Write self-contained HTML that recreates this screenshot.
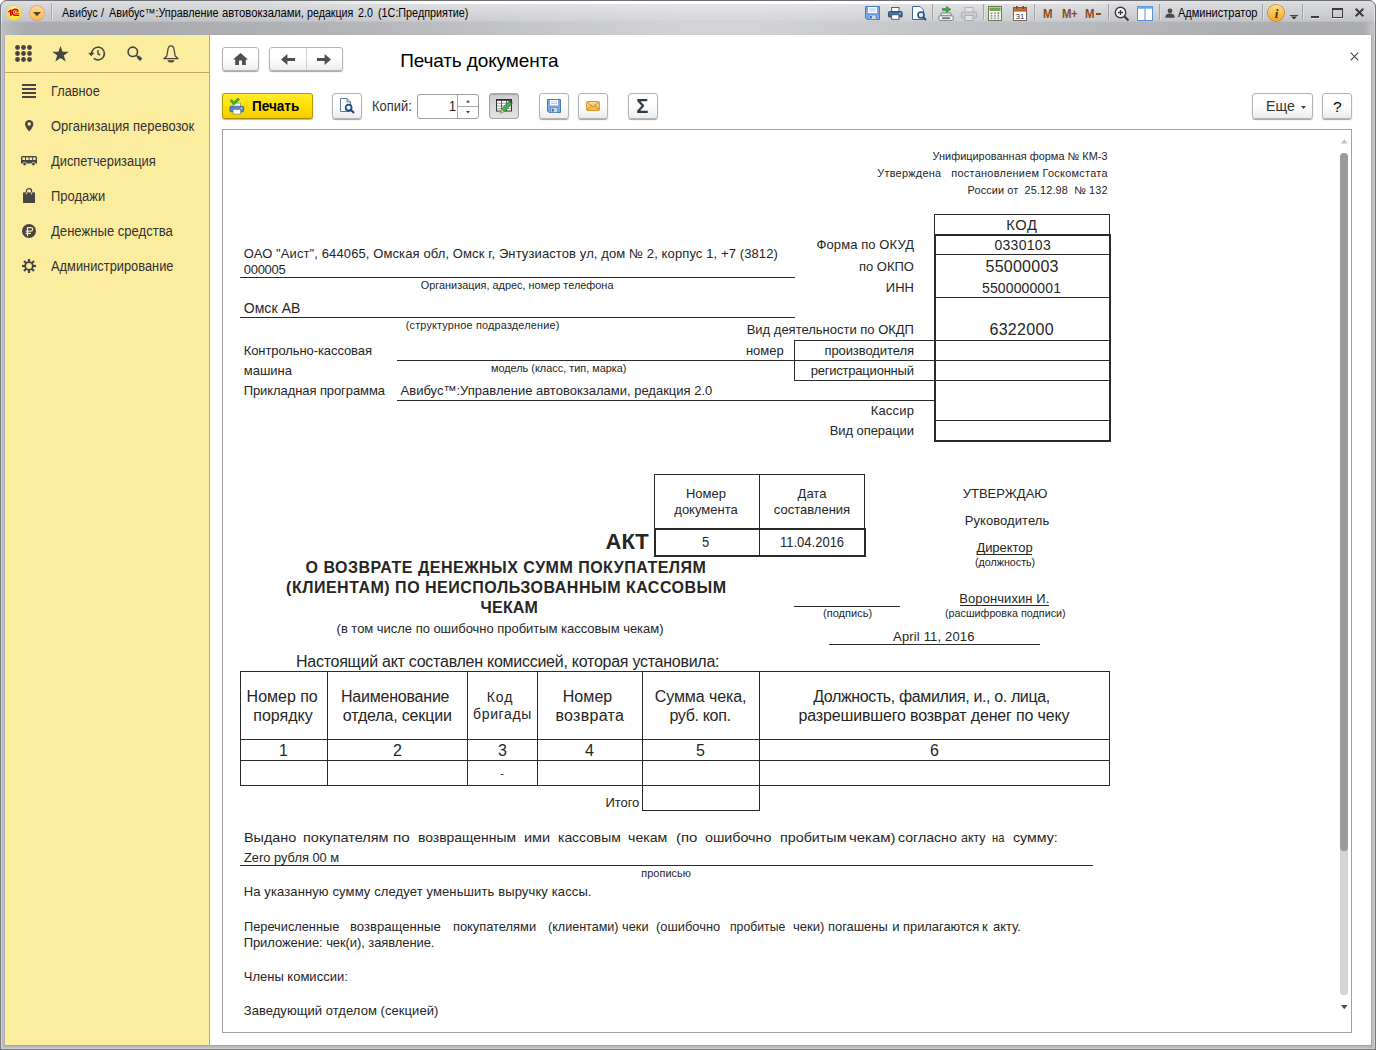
<!DOCTYPE html>
<html><head><meta charset="utf-8"><title>Печать документа</title>
<style>
html,body{margin:0;padding:0;}
body{width:1376px;height:1050px;position:relative;overflow:hidden;background:#fff;font-family:'Liberation Sans', sans-serif;}
.t{position:absolute;white-space:pre;font-family:'Liberation Sans', sans-serif;}
.r{position:absolute;}
.btn{position:absolute;box-sizing:border-box;border:1px solid #b4b4b4;border-radius:3px;background:linear-gradient(#ffffff 0%,#ffffff 45%,#ededed 100%);box-shadow:0 1px 1px rgba(0,0,0,.36);}
svg{position:absolute;overflow:visible;}
</style></head><body>
<div class="r" style="left:0px;top:0px;width:1376px;height:35px;background:linear-gradient(#e2e3e5 0px,#d9dadc 4px,#c3c4c8 21px,#abadb1 22.5px,#a9abaf 34px,#a4a6ad 35px);"></div>
<div class="r" style="left:0px;top:22px;width:26px;height:13px;background:linear-gradient(90deg,rgba(192,193,194,.95),rgba(192,193,194,0));"></div>
<div class="r" style="left:1364px;top:22px;width:12px;height:13px;background:linear-gradient(270deg,rgba(192,193,194,.95) 40%,rgba(192,193,194,0));"></div>
<div class="r" style="left:0px;top:1px;width:1376px;height:21px;background:linear-gradient(90deg,rgba(255,255,255,0.000) 150px,rgba(255,255,255,0.063) 344px,rgba(255,255,255,0.192) 520px,rgba(255,255,255,0.300) 680px,rgba(255,255,255,0.300) 760px,rgba(255,255,255,0.234) 860px,rgba(255,255,255,0.135) 1032px,rgba(255,255,255,0.039) 1200px,rgba(255,255,255,0.000) 1300px);"></div>
<div class="r" style="left:0px;top:22px;width:1376px;height:13px;background:linear-gradient(90deg,rgba(255,255,255,0.000) 150px,rgba(255,255,255,0.099) 344px,rgba(255,255,255,0.301) 520px,rgba(255,255,255,0.470) 680px,rgba(255,255,255,0.470) 760px,rgba(255,255,255,0.367) 860px,rgba(255,255,255,0.211) 1032px,rgba(255,255,255,0.061) 1200px,rgba(255,255,255,0.000) 1300px);"></div>
<div class="r" style="left:0px;top:1px;width:1376px;height:3px;background:linear-gradient(90deg,rgba(255,255,255,0) 300px,rgba(255,255,255,.95) 440px,rgba(255,255,255,.95) 980px,rgba(255,255,255,0) 1150px);"></div>
<div class="r" style="left:0px;top:0px;width:1376px;height:1px;background:#6e6f72;"></div>
<div class="r" style="left:0px;top:22px;width:1px;height:1028px;background:#787878;"></div>
<div class="r" style="left:1px;top:22px;width:1px;height:1028px;background:#d1d1d1;"></div>
<div class="r" style="left:2px;top:35px;width:1px;height:1015px;background:#bdbebf;"></div>
<div class="r" style="left:3px;top:35px;width:1px;height:1015px;background:#bdbebf;"></div>
<div class="r" style="left:4px;top:35px;width:1px;height:1015px;background:#a7a9b1;"></div>
<div class="r" style="left:1371px;top:35px;width:1px;height:1015px;background:#a7a9b1;"></div>
<div class="r" style="left:1372px;top:35px;width:1px;height:1015px;background:#bdbebf;"></div>
<div class="r" style="left:1373px;top:35px;width:1px;height:1015px;background:#bdbebf;"></div>
<div class="r" style="left:1374px;top:22px;width:1px;height:1028px;background:#d1d1d1;"></div>
<div class="r" style="left:1375px;top:22px;width:1px;height:1028px;background:#787878;"></div>
<div class="r" style="left:0px;top:1px;width:1px;height:21px;background:#787878;"></div>
<div class="r" style="left:1375px;top:1px;width:1px;height:21px;background:#787878;"></div>
<div class="r" style="left:1px;top:1px;width:1px;height:21px;background:#e4e5e6;"></div>
<div class="r" style="left:1374px;top:1px;width:1px;height:21px;background:#e4e5e6;"></div>
<div class="r" style="left:4px;top:1045px;width:1368px;height:1px;background:#a2a4ad;"></div>
<div class="r" style="left:3px;top:1046px;width:1370px;height:1px;background:#b8b9bb;"></div>
<div class="r" style="left:2px;top:1047px;width:1372px;height:1px;background:#bcbdbe;"></div>
<div class="r" style="left:1px;top:1048px;width:1374px;height:1px;background:#d0d0d0;"></div>
<div class="r" style="left:0px;top:1049px;width:1376px;height:1px;background:#777777;"></div>
<svg style="left:0;top:0" width="7" height="7"><path d="M0 0H7A7 7 0 0 0 0 7Z" fill="#fff"/><path d="M0.5 7A6.5 6.5 0 0 1 7 0.5" fill="none" stroke="#77787b"/></svg>
<svg style="left:1369px;top:0" width="7" height="7"><path d="M7 0H0A7 7 0 0 1 7 7Z" fill="#fff"/><path d="M6.5 7A6.5 6.5 0 0 0 0 0.5" fill="none" stroke="#77787b"/></svg>
<div class="r" style="left:7.1px;top:5.9px;width:14px;height:14px;border-radius:50%;background:radial-gradient(circle at 50% 30%,#fff9b0 0%,#ffea3c 55%,#f8d415 100%);box-shadow:0 0 0 .4px #e6cb45"></div>
<svg style="left:8px;top:9px" width="12" height="8" viewBox="0 0 12 8"><path d="M.3 2.4L2.4 .6H3.7V6.8H1.9V2.9L.7 3.7Z" fill="#e10000"/><path d="M10.3 2.6A3 3 0 1 0 7.5 6.2H11.2" fill="none" stroke="#e10000" stroke-width="1.5"/><path d="M8.7 3.4A1.2 1.2 0 1 0 7.5 4.3H11.2" fill="none" stroke="#e10000" stroke-width=".8"/></svg>
<div class="r" style="left:30.1px;top:5.9px;width:13.8px;height:13.8px;border-radius:50%;background:linear-gradient(#ffd890,#ffb64e);box-shadow:0 0 0 .7px #cb9c42"></div>
<svg style="left:33px;top:11.5px" width="8" height="5"><path d="M0 0H8L4 4.2Z" fill="#5a4420"/></svg>
<div class="r" style="left:51px;top:3px;width:1px;height:16px;background:#a6a7ab;"></div>
<div class="r" style="left:52px;top:3px;width:1px;height:16px;background:#e3e4e6;"></div>
<div class="t" style="left:61.66px;top:5.80px;font-size:12px;line-height:14px;color:#000;transform:scaleX(0.9044);transform-origin:0 0;">Авибус</div>
<div class="t" style="left:101.06px;top:5.80px;font-size:12px;line-height:14px;color:#000;transform:scaleX(0.9000);transform-origin:0 0;">/</div>
<div class="t" style="left:108.86px;top:5.80px;font-size:12px;line-height:14px;color:#000;transform:scaleX(0.9003);transform-origin:0 0;">Авибус™:Управление</div>
<div class="t" style="left:221.56px;top:5.80px;font-size:12px;line-height:14px;color:#000;transform:scaleX(0.9394);transform-origin:0 0;">автовокзалами,</div>
<div class="t" style="left:307.26px;top:5.80px;font-size:12px;line-height:14px;color:#000;transform:scaleX(0.8903);transform-origin:0 0;">редакция</div>
<div class="t" style="left:358.21px;top:5.80px;font-size:12px;line-height:14px;color:#000;transform:scaleX(0.8887);transform-origin:0 0;">2.0</div>
<div class="t" style="left:378.21px;top:5.80px;font-size:12px;line-height:14px;color:#000;transform:scaleX(0.8987);transform-origin:0 0;">(1С:Предприятие)</div>
<svg style="left:865px;top:6.3px" width="15" height="14" viewBox="0 0 15 14"><path d="M.5 .5H14.5V13.5H2L.5 12Z" fill="#7aa7e3" stroke="#4a7cc4"/><rect x="3" y="1" width="9" height="6" fill="#fff"/><path d="M4.5 3H10.5M4.5 5H10.5" stroke="#8fb0e0" stroke-width=".8"/><rect x="4" y="9" width="7" height="4.5" fill="#d5dae2" stroke="#3d6db3" stroke-width=".5"/><rect x="5" y="10" width="1.8" height="2.6" fill="#3d6db3"/></svg>
<svg style="left:888px;top:7px" width="14.6" height="12.8" viewBox="0 0 16 14"><rect x="4" y=".5" width="8" height="5" fill="#fff" stroke="#39577f"/><rect x=".5" y="5" width="15" height="6" rx="1" fill="#4a6d9c" stroke="#2b456b"/><rect x="4" y="8.5" width="8" height="5" fill="#fff" stroke="#39577f"/><rect x="12" y="6.5" width="2" height="1" fill="#cfe0f5"/></svg>
<svg style="left:912px;top:6px" width="15" height="15" viewBox="0 0 15 15"><path d="M.5 .5H8L11.5 4V13.5H.5Z" fill="#fff" stroke="#42648f"/><circle cx="9" cy="9" r="3" fill="#d6e8f8" stroke="#1f4e80" stroke-width="1.6"/><path d="M11.2 11.2L14 14" stroke="#1f4e80" stroke-width="2"/></svg>
<div class="r" style="left:932px;top:4px;width:1px;height:16px;background:#a3a4a8;"></div>
<div class="r" style="left:933px;top:4px;width:1px;height:16px;background:#dedfe1;"></div>
<svg style="left:938px;top:6px" width="16" height="15" viewBox="0 0 16 15"><rect x="3" y="6.8" width="10" height="3.4" rx=".8" fill="#e2e4e8" stroke="#727882" stroke-width=".9"/><rect x=".8" y="9.8" width="14.4" height="4.6" rx="1.2" fill="#f3f4f5" stroke="#727882" stroke-width=".9"/><rect x="4" y="11.4" width="8" height="1.5" fill="#5d636c"/><path d="M4.5 2.4H8.5V.4L12.8 3.4 8.5 6.4V4.4H4.5Z" fill="#41ad3d" stroke="#1d7a1b" stroke-width=".6"/></svg>
<svg style="left:961px;top:7px" width="16" height="14" viewBox="0 0 16 14" opacity=".55"><rect x="4" y=".5" width="8" height="5" fill="#f2f2f2" stroke="#8f949c"/><rect x=".5" y="5" width="15" height="6" rx="1" fill="#c3c6cc" stroke="#8f949c"/><rect x="4" y="8.5" width="8" height="5" fill="#f2f2f2" stroke="#8f949c"/></svg>
<div class="r" style="left:983px;top:4px;width:1px;height:16px;background:#a3a4a8;"></div>
<div class="r" style="left:984px;top:4px;width:1px;height:16px;background:#dedfe1;"></div>
<svg style="left:988px;top:6px" width="14" height="15" viewBox="0 0 14 15"><rect x=".5" y=".5" width="13" height="14" fill="#f1f3ee" stroke="#6a7a5c"/><rect x="1.5" y="1.5" width="11" height="3.5" fill="#6da84f"/><g fill="#7d8891"><rect x="2.8" y="6.6" width="1.5" height="1.5"/><rect x="6.2" y="6.6" width="1.5" height="1.5"/><rect x="9.6" y="6.6" width="1.5" height="1.5"/><rect x="2.8" y="9.1" width="1.5" height="1.5"/><rect x="6.2" y="9.1" width="1.5" height="1.5"/><rect x="9.6" y="9.1" width="1.5" height="1.5"/><rect x="2.8" y="11.6" width="1.5" height="1.5"/><rect x="6.2" y="11.6" width="1.5" height="1.5"/><rect x="9.6" y="11.6" width="1.5" height="1.5"/><rect x="9.6" y="6.6" width="1.5" height="1.5" fill="#d9534f"/></g></svg>
<svg style="left:1013px;top:6px" width="14" height="15" viewBox="0 0 14 15"><rect x=".5" y="1.5" width="13" height="13" fill="#fff" stroke="#7c6a5a"/><rect x=".5" y="1.5" width="13" height="3.5" fill="#c8703a" stroke="#9a4f22"/><rect x="3" y="0" width="1.5" height="3" fill="#6a4a35"/><rect x="9.5" y="0" width="1.5" height="3" fill="#6a4a35"/><text x="7" y="13" font-family="Liberation Sans" font-size="8" text-anchor="middle" fill="#333">31</text></svg>
<div class="r" style="left:1034px;top:4px;width:1px;height:16px;background:#a3a4a8;"></div>
<div class="r" style="left:1035px;top:4px;width:1px;height:16px;background:#dedfe1;"></div>
<div class="t" style="left:1043.00px;top:6.00px;font-size:13px;line-height:15px;color:#8b4a22;font-weight:700;transform:scaleX(0.8800);transform-origin:0 0;">M</div>
<div class="t" style="left:1062.00px;top:6.00px;font-size:13px;line-height:15px;color:#8b4a22;font-weight:700;transform:scaleX(0.8800);transform-origin:0 0;letter-spacing:-.6px;">M+</div>
<div class="t" style="left:1085.00px;top:6.00px;font-size:13px;line-height:15px;color:#8b4a22;font-weight:700;transform:scaleX(0.8800);transform-origin:0 0;">M</div>
<div class="r" style="left:1095.5px;top:12.5px;width:5px;height:2px;background:#8b4a22;"></div>
<div class="r" style="left:1108px;top:4px;width:1px;height:16px;background:#a3a4a8;"></div>
<div class="r" style="left:1109px;top:4px;width:1px;height:16px;background:#dedfe1;"></div>
<svg style="left:1114px;top:6px" width="16" height="16" viewBox="0 0 16 16"><circle cx="6.5" cy="6.5" r="5.2" fill="#f4f5f6" stroke="#3a3a3a" stroke-width="1.4"/><path d="M4 6.5H9M6.5 4V9" stroke="#3a3a3a" stroke-width="1.3"/><path d="M10.5 10.5L14.5 14.5" stroke="#3a3a3a" stroke-width="2.2"/></svg>
<svg style="left:1137px;top:6px" width="16" height="15" viewBox="0 0 16 15"><rect x=".5" y=".5" width="15" height="14" fill="#fff" stroke="#5b8ed4" stroke-width="1"/><rect x=".5" y=".5" width="15" height="2.2" fill="#6ea5e8"/><path d="M8 2.5V14.5" stroke="#5b8ed4" stroke-width="1"/></svg>
<div class="r" style="left:1159px;top:4px;width:1px;height:16px;background:#a3a4a8;"></div>
<div class="r" style="left:1160px;top:4px;width:1px;height:16px;background:#dedfe1;"></div>
<svg style="left:1165px;top:8px" width="10" height="10" viewBox="0 0 10 10"><circle cx="5" cy="2.8" r="2.4" fill="#4a4a4a"/><path d="M.3 9.8C.3 6.6 2.2 5.6 5 5.6S9.7 6.6 9.7 9.8Z" fill="#4a4a4a"/></svg>
<div class="t" style="left:1178.16px;top:6.00px;font-size:12px;line-height:14px;color:#000;transform:scaleX(0.9180);transform-origin:0 0;">Администратор</div>
<div class="r" style="left:1262px;top:4px;width:1px;height:16px;background:#a3a4a8;"></div>
<div class="r" style="left:1263px;top:4px;width:1px;height:16px;background:#dedfe1;"></div>
<div class="r" style="left:1268px;top:5px;width:16px;height:16px;border-radius:50%;background:linear-gradient(#ffdf7c,#f5a623);box-shadow:0 0 0 .8px #b9801d"></div>
<div class="t" style="left:1274.70px;top:6.00px;font-size:13px;line-height:15px;color:#4a3210;font-weight:700;font-family:'Liberation Serif',serif;font-style:italic;">i</div>
<svg style="left:1289.5px;top:15px" width="8" height="5"><path d="M0 .5H8" stroke="#444" stroke-width="1"/><path d="M1 1.5H7L4 4.5Z" fill="#333"/></svg>
<div class="r" style="left:1302px;top:4px;width:1px;height:16px;background:#a3a4a8;"></div>
<div class="r" style="left:1303px;top:4px;width:1px;height:16px;background:#dedfe1;"></div>
<div class="r" style="left:1311px;top:16px;width:8px;height:2px;background:#3c3c3c;"></div>
<div class="r" style="left:1311px;top:18px;width:8px;height:1px;background:#e8e8ea;"></div>
<div class="r" style="left:1332px;top:8px;width:11px;height:10px;box-sizing:border-box;border:1px solid #3c3c3c;border-top-width:2px;box-shadow:0 1px 0 #e6e6e8"></div>
<svg style="left:1355px;top:8px" width="9" height="9"><path d="M.7 .7L8.3 8.3M8.3 .7L.7 8.3" stroke="#3c3c3c" stroke-width="2"/></svg>
<div class="r" style="left:5px;top:35px;width:205px;height:1010px;background:#fcec9d;"></div>
<div class="r" style="left:5px;top:35px;width:1px;height:1010px;background:#fff2a0;"></div>
<div class="r" style="left:208px;top:35px;width:1px;height:1010px;background:#fef0a1;"></div>
<div class="r" style="left:5px;top:71px;width:203px;height:1px;background:#fef0a1;"></div>
<div class="r" style="left:5px;top:73px;width:203px;height:1px;background:#fef0a1;"></div>
<div class="r" style="left:209px;top:35px;width:1px;height:1010px;background:#bbaa5b;"></div>
<div class="r" style="left:5px;top:72px;width:204px;height:1px;background:#bcab5c;"></div>
<svg style="left:15px;top:45px" width="17" height="17" fill="#454545"><circle cx="2.5" cy="2.5" r="2.4"/><circle cx="2.5" cy="8.5" r="2.4"/><circle cx="2.5" cy="14.5" r="2.4"/><circle cx="8.5" cy="2.5" r="2.4"/><circle cx="8.5" cy="8.5" r="2.4"/><circle cx="8.5" cy="14.5" r="2.4"/><circle cx="14.5" cy="2.5" r="2.4"/><circle cx="14.5" cy="8.5" r="2.4"/><circle cx="14.5" cy="14.5" r="2.4"/></svg>
<svg style="left:52.3px;top:45.8px" width="17" height="16" viewBox="0 0 17 16"><path d="M8.5 0L10.6 5.7H16.8L11.8 9.4 13.7 15.6 8.5 11.9 3.3 15.6 5.2 9.4 .2 5.7H6.4Z" fill="#454545"/></svg>
<svg style="left:88px;top:45px" width="18" height="17" viewBox="0 0 18 17"><path d="M3.6 8.9A6.4 6.4 0 1 1 5.8 13.4" fill="none" stroke="#454545" stroke-width="1.5"/><path d="M.2 7.7H6.4L3.3 11.2Z" fill="#454545"/><path d="M10 5V8.8L12.2 10.2" fill="none" stroke="#454545" stroke-width="1.4"/></svg>
<svg style="left:127px;top:46px" width="16" height="15" viewBox="0 0 16 15"><circle cx="5.8" cy="5.8" r="4.7" fill="none" stroke="#454545" stroke-width="1.6"/><path d="M9.1 9.1L11.4 11.2" stroke="#454545" stroke-width="1.5"/><path d="M10.9 10.7L14.2 13.7" stroke="#454545" stroke-width="3.2"/></svg>
<svg style="left:163px;top:44.5px" width="16" height="18" viewBox="0 0 16 18"><path d="M8 .9C5.9 .9 5.2 2.6 4.9 4.6L3.8 11 .9 13.7H15.1L12.2 11 11.1 4.6C10.8 2.6 10.1 .9 8 .9Z" fill="none" stroke="#454545" stroke-width="1.25" stroke-linejoin="round"/><path d="M4.6 15.2H11.4A3.4 2.2 0 0 1 4.6 15.2Z" fill="#454545"/></svg>
<div class="t" style="left:50.67px;top:83.00px;font-size:14px;line-height:16px;color:#333;transform:scaleX(0.9114);transform-origin:0 0;">Главное</div>
<div class="t" style="left:50.67px;top:118.00px;font-size:14px;line-height:16px;color:#333;transform:scaleX(0.9281);transform-origin:0 0;">Организация перевозок</div>
<div class="t" style="left:50.67px;top:153.00px;font-size:14px;line-height:16px;color:#333;transform:scaleX(0.9186);transform-origin:0 0;">Диспетчеризация</div>
<div class="t" style="left:50.67px;top:188.00px;font-size:14px;line-height:16px;color:#333;transform:scaleX(0.9263);transform-origin:0 0;">Продажи</div>
<div class="t" style="left:50.67px;top:223.00px;font-size:14px;line-height:16px;color:#333;transform:scaleX(0.9347);transform-origin:0 0;">Денежные средства</div>
<div class="t" style="left:50.67px;top:258.00px;font-size:14px;line-height:16px;color:#333;transform:scaleX(0.9173);transform-origin:0 0;">Администрирование</div>
<div class="r" style="left:22px;top:84px;width:14px;height:2px;background:#454545;"></div>
<div class="r" style="left:22px;top:88px;width:14px;height:2px;background:#454545;"></div>
<div class="r" style="left:22px;top:92px;width:14px;height:2px;background:#454545;"></div>
<div class="r" style="left:22px;top:96px;width:14px;height:2px;background:#454545;"></div>
<svg style="left:25px;top:119.8px" width="8.4" height="11.4" viewBox="0 0 8 11"><path d="M4 0A4 4 0 0 0 0 4C0 6.6 4 11 4 11S8 6.6 8 4A4 4 0 0 0 4 0Z" fill="#454545"/><circle cx="4" cy="3.9" r="1.7" fill="#fcec9d"/></svg>
<svg style="left:21px;top:156px" width="16" height="10" viewBox="0 0 16 10"><path d="M1.5 0H14.5A1.5 1.5 0 0 1 16 1.5V7.6H0V1.5A1.5 1.5 0 0 1 1.5 0Z" fill="#454545"/><g fill="#fcec9d"><rect x="1.4" y="1.4" width="2.6" height="2.6"/><rect x="5" y="1.4" width="2.6" height="2.6"/><rect x="8.6" y="1.4" width="2.6" height="2.6"/><rect x="12.2" y="1.4" width="2.4" height="2.6"/></g><circle cx="3.6" cy="8" r="1.8" fill="#454545" stroke="#fcec9d" stroke-width=".7"/><circle cx="12.4" cy="8" r="1.8" fill="#454545" stroke="#fcec9d" stroke-width=".7"/></svg>
<svg style="left:23px;top:188px" width="12" height="15" viewBox="0 0 12 15"><path d="M0 4.4H12V15H0Z" fill="#454545"/><path d="M3.4 6V3.2A2.6 2.6 0 0 1 8.6 3.2V6" fill="none" stroke="#454545" stroke-width="1.2"/><path d="M3.4 4.4V6.4M8.6 4.4V6.4" stroke="#fcec9d" stroke-width=".9"/></svg>
<svg style="left:22px;top:224px" width="14" height="14" viewBox="0 0 14 14"><circle cx="7" cy="7" r="7" fill="#454545"/><path d="M5.5 12.1V3.55H9A1.75 1.75 0 0 1 9 7.05H3.7" fill="none" stroke="#fcec9d" stroke-width="1.2"/><path d="M3.7 9.35H8.9" fill="none" stroke="#fcec9d" stroke-width="1.3"/></svg>
<svg style="left:22px;top:259px" width="14" height="14" viewBox="0 0 14 14" fill="#454545"><rect x="5.9" y="0" width="2.2" height="3" transform="rotate(0 7 7)"/><rect x="5.9" y="0" width="2.2" height="3" transform="rotate(45 7 7)"/><rect x="5.9" y="0" width="2.2" height="3" transform="rotate(90 7 7)"/><rect x="5.9" y="0" width="2.2" height="3" transform="rotate(135 7 7)"/><rect x="5.9" y="0" width="2.2" height="3" transform="rotate(180 7 7)"/><rect x="5.9" y="0" width="2.2" height="3" transform="rotate(225 7 7)"/><rect x="5.9" y="0" width="2.2" height="3" transform="rotate(270 7 7)"/><rect x="5.9" y="0" width="2.2" height="3" transform="rotate(315 7 7)"/><circle cx="7" cy="7" r="4.7"/><circle cx="7" cy="7" r="2.9" fill="#fcec9d"/></svg>
<div class="btn" style="left:222px;top:47px;width:37px;height:24px;"></div>
<svg style="left:233px;top:53px" width="15" height="12" viewBox="0 0 15 12"><path d="M7.5 0L15 6.6H12.8V12H9V7.6H6V12H2.2V6.6H0Z" fill="#4f4f4f"/></svg>
<div class="btn" style="left:269px;top:47px;width:74px;height:24px;"></div>
<div class="r" style="left:306px;top:48px;width:1px;height:22px;background:#d0d0d0;"></div>
<svg style="left:281px;top:53.5px" width="14" height="11" viewBox="0 0 14 11"><path d="M0 5.5L6.4 0V3.9H14V7.1H6.4V11Z" fill="#4f4f4f"/></svg>
<svg style="left:317px;top:53.5px" width="14" height="11" viewBox="0 0 14 11"><path d="M14 5.5L7.6 0V3.9H0V7.1H7.6V11Z" fill="#4f4f4f"/></svg>
<div class="t" style="left:400.14px;top:49.50px;font-size:19px;line-height:21px;color:#000;letter-spacing:-0.123px;">Печать документа</div>
<svg style="left:1350px;top:52px" width="9" height="9"><path d="M.7 .7L8.3 8.3M8.3 .7L.7 8.3" stroke="#444" stroke-width="1.1"/></svg>
<div class="btn" style="left:222px;top:93px;width:91px;height:26px;border-color:#b9a000 #b49a00 #a88e00;background:linear-gradient(#ffea30 0%,#ffe100 50%,#f4cb00 100%);box-shadow:0 1px 1px rgba(0,0,0,.3)"></div>
<svg style="left:229.3px;top:97.5px" width="15.6" height="16.6" viewBox="0 0 17 18"><rect x="4.5" y="5.5" width="8" height="5" fill="#fff" stroke="#7b8794" stroke-width=".8"/><rect x="1" y="9" width="15" height="6" rx="1" fill="#5b87c0" stroke="#33598c" stroke-width=".8"/><rect x="4.5" y="12.5" width="8" height="5" fill="#fff" stroke="#7b8794" stroke-width=".8"/><circle cx="13.6" cy="11" r=".8" fill="#fff"/><path d="M1.2 3.2L3 1.6 5.6 4.2 9.6 0 11.4 1.6 5.6 7.6Z" fill="#35b535" stroke="#1b7f1b" stroke-width=".6"/></svg>
<div class="t" style="left:251.87px;top:98.00px;font-size:14px;line-height:16px;color:#000;font-weight:700;transform:scaleX(0.9666);transform-origin:0 0;">Печать</div>
<div class="btn" style="left:332px;top:93px;width:30px;height:26px;"></div>
<svg style="left:340px;top:98px" width="15" height="16" viewBox="0 0 15 16"><path d="M.5 .5H7L10.5 4V13.5H.5Z" fill="#fff" stroke="#5b7698"/><path d="M7 .5V4H10.5" fill="none" stroke="#5b7698"/><circle cx="8.6" cy="9.6" r="3" fill="#e6f1fb" stroke="#174a7c" stroke-width="1.7"/><path d="M10.8 11.8L14 15" stroke="#174a7c" stroke-width="2.1"/></svg>
<div class="t" style="left:371.67px;top:98.00px;font-size:14px;line-height:16px;color:#333;transform:scaleX(0.9233);transform-origin:0 0;">Копий:</div>
<div class="r" style="left:417px;top:94px;width:62px;height:25px;box-sizing:border-box;border:1px solid #9e9e9e;border-radius:3px;background:#fff"></div>
<div class="r" style="left:457px;top:95px;width:1px;height:23px;background:#a8a8a8;"></div>
<div class="r" style="left:458px;top:106px;width:20px;height:1px;background:#a8a8a8;"></div>
<div class="t" style="left:448.67px;top:98.00px;font-size:14px;line-height:16px;color:#222;transform:scaleX(0.9000);transform-origin:0 0;">1</div>
<svg style="left:465.5px;top:100px" width="4" height="3"><path d="M0 2.5H4L2 0Z" fill="#444"/></svg>
<svg style="left:465.5px;top:111px" width="4" height="3"><path d="M0 0H4L2 2.5Z" fill="#444"/></svg>
<div class="btn" style="left:489px;top:93px;width:30px;height:26px;background:linear-gradient(#cecece,#e2e2e2);border-color:#a3a3a3;box-shadow:inset 0 1px 1px rgba(0,0,0,.18)"></div>
<svg style="left:496px;top:99px" width="17" height="15" viewBox="0 0 17 15"><rect x=".5" y=".5" width="15" height="11.5" fill="#fff" stroke="#2e2e2e"/><path d="M.5 1H15.5" stroke="#2e2e2e" stroke-width="1.6"/><path d="M.5 4.3H15.5M.5 7H15.5M.5 9.6H15.5" stroke="#777" stroke-width=".7"/><path d="M5.5 1V12M10.5 1V12" stroke="#444" stroke-width=".8"/><path d="M12.6 2.4L15.8 5 8.6 12.6 5.6 10Z" fill="#41b04b" stroke="#1f7a2a" stroke-width=".6"/><path d="M12.6 2.4L13.8 1.2 16.8 3.7 15.8 5Z" fill="#4a4a4a"/><path d="M5.6 10L8.6 12.6 4 14.4Z" fill="#e8c48a" stroke="#8a6a3a" stroke-width=".5"/></svg>
<div class="btn" style="left:539px;top:93px;width:30px;height:26px;"></div>
<svg style="left:547px;top:99px" width="14" height="14" viewBox="0 0 14 14"><path d="M.5 .5H13.5V13.5H2L.5 12Z" fill="#7ba7e2" stroke="#4478c0"/><rect x="3" y="1" width="8" height="5.4" fill="#fff"/><path d="M4 2.8H10M4 4.6H10" stroke="#9fb5d6" stroke-width=".7"/><rect x="3.6" y="8.6" width="7" height="4.9" fill="#cdd5d2" stroke="#4478c0" stroke-width=".5"/><rect x="4.8" y="9.8" width="1.8" height="2.8" fill="#3465a8"/></svg>
<div class="btn" style="left:578px;top:93px;width:30px;height:26px;"></div>
<svg style="left:586px;top:101px" width="14" height="10" viewBox="0 0 14 10"><defs><linearGradient id="mg" x1="0" y1="0" x2="0" y2="1"><stop offset="0" stop-color="#fcdc95"/><stop offset="1" stop-color="#f2b54a"/></linearGradient></defs><rect x=".5" y=".5" width="13" height="9" rx="1" fill="url(#mg)" stroke="#d9962b"/><path d="M1 1L7 6 13 1M1 9L5.2 4.6M13 9L8.8 4.6" fill="none" stroke="#c07f12" stroke-width=".9"/></svg>
<div class="btn" style="left:628px;top:93px;width:30px;height:26px;"></div>
<div class="t" style="left:636.30px;top:95.00px;font-size:20px;line-height:22px;color:#2b3a4a;font-weight:700;">Σ</div>
<div class="btn" style="left:1252px;top:93px;width:61px;height:26px;"></div>
<div class="t" style="left:1265.67px;top:98.00px;font-size:14px;line-height:16px;color:#333;transform:scaleX(1.0091);transform-origin:0 0;">Еще</div>
<svg style="left:1301px;top:106px" width="5" height="3"><path d="M0 0H5L2.5 3Z" fill="#444"/></svg>
<div class="btn" style="left:1322px;top:93px;width:30px;height:26px;"></div>
<div class="t" style="left:1332.89px;top:98.00px;font-size:15.5px;line-height:17px;color:#000;">?</div>
<div class="r" style="left:222px;top:129px;width:1130px;height:904px;box-sizing:border-box;border:1px solid #a0a0a0;background:#fff"></div>
<svg style="left:1341px;top:139px" width="7" height="5"><path d="M0 4.5H6.6L3.3 0Z" fill="#c3c3c3"/></svg>
<div class="r" style="left:1340px;top:153px;width:8px;height:842px;border-radius:4px;background:#d5d5d5"></div>
<div class="r" style="left:1340px;top:153px;width:8px;height:698px;border-radius:4px;background:#9b9b9b"></div>
<svg style="left:1340.5px;top:1005px" width="7" height="5"><path d="M0 0H6.6L3.3 4.2Z" fill="#4d4d4d"/></svg>
<div class="t" style="left:932.54px;top:150.00px;font-size:10.9px;line-height:12px;color:#262626;letter-spacing:0.028px;">Унифицированная форма № КМ-3</div>
<div class="t" style="left:877.19px;top:167.00px;font-size:10.9px;line-height:12px;color:#262626;letter-spacing:0.279px;">Утверждена   постановлением Госкомстата</div>
<div class="t" style="left:967.62px;top:184.00px;font-size:10.9px;line-height:12px;color:#262626;letter-spacing:0.110px;">России от  25.12.98  № 132</div>
<div class="r" style="left:934px;top:214px;width:176px;height:1px;background:#2a2a2a;"></div>
<div class="r" style="left:934px;top:214px;width:1px;height:21px;background:#2a2a2a;"></div>
<div class="r" style="left:1109px;top:214px;width:1px;height:21px;background:#2a2a2a;"></div>
<div class="r" style="left:934px;top:234px;width:177px;height:2px;background:#2a2a2a;"></div>
<div class="r" style="left:934px;top:234px;width:2px;height:208px;background:#2a2a2a;"></div>
<div class="r" style="left:1109px;top:234px;width:2px;height:208px;background:#2a2a2a;"></div>
<div class="r" style="left:934px;top:440px;width:177px;height:2px;background:#2a2a2a;"></div>
<div class="r" style="left:936px;top:254px;width:173px;height:1px;background:#2a2a2a;"></div>
<div class="r" style="left:936px;top:297px;width:173px;height:1px;background:#2a2a2a;"></div>
<div class="r" style="left:936px;top:340px;width:173px;height:1px;background:#2a2a2a;"></div>
<div class="r" style="left:936px;top:360px;width:173px;height:1px;background:#2a2a2a;"></div>
<div class="r" style="left:936px;top:380px;width:173px;height:1px;background:#2a2a2a;"></div>
<div class="r" style="left:936px;top:420px;width:173px;height:1px;background:#2a2a2a;"></div>
<div class="t" style="left:1006.16px;top:217.00px;font-size:14.67px;line-height:16px;color:#262626;letter-spacing:0.643px;">КОД</div>
<div class="t" style="left:994.42px;top:236.50px;font-size:14px;line-height:16px;color:#262626;letter-spacing:0.306px;">0330103</div>
<div class="t" style="left:985.55px;top:257.50px;font-size:16px;line-height:17px;color:#262626;letter-spacing:0.244px;">55000003</div>
<div class="t" style="left:981.98px;top:279.50px;font-size:14px;line-height:16px;color:#262626;letter-spacing:0.129px;">5500000001</div>
<div class="t" style="left:989.43px;top:321.00px;font-size:16px;line-height:17px;color:#262626;letter-spacing:0.306px;">6322000</div>
<div class="t" style="left:816.51px;top:237.00px;font-size:13px;line-height:15px;color:#262626;letter-spacing:0.096px;">Форма по ОКУД</div>
<div class="t" style="left:858.95px;top:259.00px;font-size:13px;line-height:15px;color:#262626;">по ОКПО</div>
<div class="t" style="left:885.86px;top:280.00px;font-size:13px;line-height:15px;color:#262626;">ИНН</div>
<div class="t" style="left:746.71px;top:322.00px;font-size:13px;line-height:15px;color:#262626;letter-spacing:-0.006px;">Вид деятельности по ОКДП</div>
<div class="t" style="left:824.43px;top:343.00px;font-size:13px;line-height:15px;color:#262626;letter-spacing:-0.080px;">производителя</div>
<div class="t" style="left:810.70px;top:363.00px;font-size:13px;line-height:15px;color:#262626;letter-spacing:-0.214px;">регистрационный</div>
<div class="t" style="left:870.63px;top:403.00px;font-size:13px;line-height:15px;color:#262626;letter-spacing:0.212px;">Кассир</div>
<div class="t" style="left:829.74px;top:423.00px;font-size:13px;line-height:15px;color:#262626;letter-spacing:-0.074px;">Вид операции</div>
<div class="t" style="left:745.91px;top:343.00px;font-size:13px;line-height:15px;color:#262626;">номер</div>
<div class="r" style="left:794px;top:340px;width:141px;height:1px;background:#2a2a2a;"></div>
<div class="r" style="left:794px;top:360px;width:141px;height:1px;background:#2a2a2a;"></div>
<div class="r" style="left:794px;top:380px;width:141px;height:1px;background:#2a2a2a;"></div>
<div class="r" style="left:794px;top:340px;width:1px;height:41px;background:#2a2a2a;"></div>
<div class="t" style="left:243.72px;top:246.00px;font-size:13px;line-height:15px;color:#262626;letter-spacing:0.107px;">ОАО &quot;Аист&quot;, 644065, Омская обл, Омск г, Энтузиастов ул, дом № 2, корпус 1, +7 (3812)</div>
<div class="t" style="left:243.72px;top:262.00px;font-size:13px;line-height:15px;color:#262626;letter-spacing:-0.270px;">000005</div>
<div class="r" style="left:240px;top:277px;width:555px;height:1px;background:#2a2a2a;"></div>
<div class="t" style="left:420.71px;top:279.30px;font-size:10.9px;line-height:12px;color:#262626;letter-spacing:0.007px;">Организация, адрес, номер телефона</div>
<div class="t" style="left:243.67px;top:300.00px;font-size:14px;line-height:16px;color:#262626;letter-spacing:0.092px;">Омск АВ</div>
<div class="r" style="left:240px;top:317px;width:555px;height:1px;background:#2a2a2a;"></div>
<div class="t" style="left:405.71px;top:319.00px;font-size:10.9px;line-height:12px;color:#262626;letter-spacing:0.176px;">(структурное подразделение)</div>
<div class="t" style="left:243.72px;top:343.00px;font-size:13px;line-height:15px;color:#262626;letter-spacing:-0.087px;">Контрольно-кассовая</div>
<div class="r" style="left:397px;top:360px;width:398px;height:1px;background:#2a2a2a;"></div>
<div class="t" style="left:243.72px;top:363.00px;font-size:13px;line-height:15px;color:#262626;">машина</div>
<div class="t" style="left:490.91px;top:362.00px;font-size:10.9px;line-height:12px;color:#262626;">модель (класс, тип, марка)</div>
<div class="t" style="left:243.72px;top:383.00px;font-size:13px;line-height:15px;color:#262626;letter-spacing:-0.088px;">Прикладная программа</div>
<div class="t" style="left:400.62px;top:383.00px;font-size:13px;line-height:15px;color:#262626;letter-spacing:0.002px;">Авибус™:Управление автовокзалами, редакция 2.0</div>
<div class="r" style="left:397px;top:400px;width:538px;height:1px;background:#2a2a2a;"></div>
<div class="r" style="left:654px;top:474px;width:211px;height:1px;background:#2a2a2a;"></div>
<div class="r" style="left:654px;top:474px;width:1px;height:55px;background:#2a2a2a;"></div>
<div class="r" style="left:759px;top:474px;width:1px;height:82px;background:#2a2a2a;"></div>
<div class="r" style="left:864px;top:474px;width:1px;height:55px;background:#2a2a2a;"></div>
<div class="r" style="left:654px;top:528px;width:212px;height:2px;background:#2a2a2a;"></div>
<div class="r" style="left:654px;top:528px;width:2px;height:29px;background:#2a2a2a;"></div>
<div class="r" style="left:864px;top:528px;width:2px;height:29px;background:#2a2a2a;"></div>
<div class="r" style="left:654px;top:555px;width:212px;height:2px;background:#2a2a2a;"></div>
<div class="t" style="left:685.99px;top:486.00px;font-size:13px;line-height:15px;color:#262626;">Номер</div>
<div class="t" style="left:674.30px;top:502.00px;font-size:13px;line-height:15px;color:#262626;">документа</div>
<div class="t" style="left:797.60px;top:486.00px;font-size:13px;line-height:15px;color:#262626;">Дата</div>
<div class="t" style="left:773.84px;top:502.00px;font-size:13px;line-height:15px;color:#262626;">составления</div>
<div class="t" style="left:702.36px;top:533.50px;font-size:14.5px;line-height:16px;color:#262626;transform:scaleX(0.9000);transform-origin:0 0;">5</div>
<div class="t" style="left:780.35px;top:533.50px;font-size:14.5px;line-height:16px;color:#262626;transform:scaleX(0.8966);transform-origin:0 0;">11.04.2016</div>
<div class="t" style="left:605.61px;top:529.00px;font-size:22px;line-height:25px;color:#262626;font-weight:700;letter-spacing:-0.111px;">АКТ</div>
<div class="t" style="left:305.58px;top:558.50px;font-size:16px;line-height:17px;color:#262626;font-weight:700;letter-spacing:0.485px;">О ВОЗВРАТЕ ДЕНЕЖНЫХ СУММ ПОКУПАТЕЛЯМ</div>
<div class="t" style="left:286.08px;top:579.00px;font-size:16px;line-height:17px;color:#262626;font-weight:700;letter-spacing:0.507px;">(КЛИЕНТАМ) ПО НЕИСПОЛЬЗОВАННЫМ КАССОВЫМ</div>
<div class="t" style="left:480.58px;top:599.00px;font-size:16px;line-height:17px;color:#262626;font-weight:700;letter-spacing:0.195px;">ЧЕКАМ</div>
<div class="t" style="left:336.62px;top:621.00px;font-size:13px;line-height:15px;color:#262626;letter-spacing:-0.029px;">(в том числе по ошибочно пробитым кассовым чекам)</div>
<div class="t" style="left:295.98px;top:653.40px;font-size:16px;line-height:17px;color:#262626;letter-spacing:-0.261px;">Настоящий акт составлен комиссией, которая установила:</div>
<div class="t" style="left:962.71px;top:485.60px;font-size:13px;line-height:15px;color:#262626;letter-spacing:0.009px;">УТВЕРЖДАЮ</div>
<div class="t" style="left:964.71px;top:513.00px;font-size:13px;line-height:15px;color:#262626;letter-spacing:0.075px;">Руководитель</div>
<div class="t" style="left:976.41px;top:540.00px;font-size:13px;line-height:15px;color:#262626;letter-spacing:-0.059px;">Директор</div>
<div class="r" style="left:977px;top:554px;width:55px;height:1px;background:#2a2a2a;"></div>
<div class="t" style="left:974.75px;top:557.40px;font-size:10px;line-height:11px;color:#262626;transform:scaleX(1.0702);transform-origin:0 0;">(должность)</div>
<div class="t" style="left:959.31px;top:591.00px;font-size:13px;line-height:15px;color:#262626;letter-spacing:0.075px;">Ворончихин И.</div>
<div class="r" style="left:960px;top:605px;width:89px;height:1px;background:#2a2a2a;"></div>
<div class="t" style="left:944.55px;top:608.00px;font-size:10px;line-height:11px;color:#262626;transform:scaleX(1.0751);transform-origin:0 0;">(расшифровка подписи)</div>
<div class="r" style="left:794px;top:606px;width:106px;height:1px;background:#2a2a2a;"></div>
<div class="t" style="left:822.55px;top:608.00px;font-size:10px;line-height:11px;color:#262626;transform:scaleX(1.1041);transform-origin:0 0;">(подпись)</div>
<div class="t" style="left:893.12px;top:629.00px;font-size:13px;line-height:15px;color:#262626;letter-spacing:0.157px;">April 11, 2016</div>
<div class="r" style="left:829px;top:644px;width:211px;height:1px;background:#2a2a2a;"></div>
<div class="r" style="left:240px;top:671px;width:870px;height:1px;background:#2a2a2a;"></div>
<div class="r" style="left:240px;top:739px;width:870px;height:1px;background:#2a2a2a;"></div>
<div class="r" style="left:240px;top:760px;width:870px;height:1px;background:#2a2a2a;"></div>
<div class="r" style="left:240px;top:785px;width:870px;height:1px;background:#2a2a2a;"></div>
<div class="r" style="left:240px;top:671px;width:1px;height:115px;background:#2a2a2a;"></div>
<div class="r" style="left:327px;top:671px;width:1px;height:115px;background:#2a2a2a;"></div>
<div class="r" style="left:467px;top:671px;width:1px;height:115px;background:#2a2a2a;"></div>
<div class="r" style="left:537px;top:671px;width:1px;height:115px;background:#2a2a2a;"></div>
<div class="r" style="left:642px;top:671px;width:1px;height:115px;background:#2a2a2a;"></div>
<div class="r" style="left:759px;top:671px;width:1px;height:115px;background:#2a2a2a;"></div>
<div class="r" style="left:1109px;top:671px;width:1px;height:115px;background:#2a2a2a;"></div>
<div class="r" style="left:642px;top:810px;width:118px;height:1px;background:#2a2a2a;"></div>
<div class="r" style="left:642px;top:785px;width:1px;height:26px;background:#2a2a2a;"></div>
<div class="r" style="left:759px;top:785px;width:1px;height:26px;background:#2a2a2a;"></div>
<div class="t" style="left:246.62px;top:688.00px;font-size:16px;line-height:17px;color:#262626;letter-spacing:-0.016px;">Номер по</div>
<div class="t" style="left:253.27px;top:706.50px;font-size:16px;line-height:17px;color:#262626;">порядку</div>
<div class="t" style="left:340.88px;top:688.00px;font-size:16px;line-height:17px;color:#262626;letter-spacing:-0.207px;">Наименование</div>
<div class="t" style="left:342.85px;top:706.50px;font-size:16px;line-height:17px;color:#262626;letter-spacing:-0.155px;">отдела, секции</div>
<div class="t" style="left:486.81px;top:689.00px;font-size:14px;line-height:16px;color:#262626;letter-spacing:0.883px;">Код</div>
<div class="t" style="left:473.08px;top:706.30px;font-size:14px;line-height:16px;color:#262626;letter-spacing:0.630px;">бригады</div>
<div class="t" style="left:562.76px;top:688.00px;font-size:16px;line-height:17px;color:#262626;letter-spacing:0.058px;">Номер</div>
<div class="t" style="left:555.43px;top:706.50px;font-size:16px;line-height:17px;color:#262626;letter-spacing:0.308px;">возврата</div>
<div class="t" style="left:654.73px;top:688.00px;font-size:16px;line-height:17px;color:#262626;letter-spacing:-0.092px;">Сумма чека,</div>
<div class="t" style="left:669.46px;top:706.50px;font-size:16px;line-height:17px;color:#262626;letter-spacing:-0.333px;">руб. коп.</div>
<div class="t" style="left:813.19px;top:688.00px;font-size:16px;line-height:17px;color:#262626;letter-spacing:-0.373px;">Должность, фамилия, и., о. лица,</div>
<div class="t" style="left:798.55px;top:706.50px;font-size:16px;line-height:17px;color:#262626;letter-spacing:-0.165px;">разрешившего возврат денег по чеку</div>
<div class="t" style="left:279.05px;top:741.60px;font-size:16px;line-height:17px;color:#262626;">1</div>
<div class="t" style="left:393.05px;top:741.60px;font-size:16px;line-height:17px;color:#262626;">2</div>
<div class="t" style="left:498.05px;top:741.60px;font-size:16px;line-height:17px;color:#262626;">3</div>
<div class="t" style="left:585.05px;top:741.60px;font-size:16px;line-height:17px;color:#262626;">4</div>
<div class="t" style="left:696.05px;top:741.60px;font-size:16px;line-height:17px;color:#262626;">5</div>
<div class="t" style="left:930.05px;top:741.60px;font-size:16px;line-height:17px;color:#262626;">6</div>
<div class="t" style="left:500.16px;top:767.00px;font-size:11px;line-height:12px;color:#262626;">-</div>
<div class="t" style="left:605.45px;top:794.50px;font-size:13px;line-height:15px;color:#262626;letter-spacing:-0.062px;">Итого</div>
<div class="t" style="left:243.81px;top:829.50px;font-size:13px;line-height:15px;color:#262626;transform:scaleX(1.1041);transform-origin:0 0;">Выдано</div>
<div class="t" style="left:303.22px;top:829.50px;font-size:13px;line-height:15px;color:#262626;transform:scaleX(1.1147);transform-origin:0 0;">покупателям</div>
<div class="t" style="left:392.62px;top:829.50px;font-size:13px;line-height:15px;color:#262626;transform:scaleX(1.1743);transform-origin:0 0;">по</div>
<div class="t" style="left:417.62px;top:829.50px;font-size:13px;line-height:15px;color:#262626;transform:scaleX(1.0696);transform-origin:0 0;">возвращенным</div>
<div class="t" style="left:523.81px;top:829.50px;font-size:13px;line-height:15px;color:#262626;transform:scaleX(1.1151);transform-origin:0 0;">ими</div>
<div class="t" style="left:558.21px;top:829.50px;font-size:13px;line-height:15px;color:#262626;transform:scaleX(1.0679);transform-origin:0 0;">кассовым</div>
<div class="t" style="left:628.31px;top:829.50px;font-size:13px;line-height:15px;color:#262626;transform:scaleX(1.0889);transform-origin:0 0;">чекам</div>
<div class="t" style="left:675.91px;top:829.50px;font-size:13px;line-height:15px;color:#262626;transform:scaleX(1.1483);transform-origin:0 0;">(по</div>
<div class="t" style="left:704.91px;top:829.50px;font-size:13px;line-height:15px;color:#262626;transform:scaleX(1.0970);transform-origin:0 0;">ошибочно</div>
<div class="t" style="left:779.81px;top:829.50px;font-size:13px;line-height:15px;color:#262626;transform:scaleX(1.0995);transform-origin:0 0;">пробитым</div>
<div class="t" style="left:848.91px;top:829.50px;font-size:13px;line-height:15px;color:#262626;transform:scaleX(1.1503);transform-origin:0 0;">чекам)</div>
<div class="t" style="left:898.41px;top:829.50px;font-size:13px;line-height:15px;color:#262626;transform:scaleX(1.0871);transform-origin:0 0;">согласно</div>
<div class="t" style="left:960.51px;top:829.50px;font-size:13px;line-height:15px;color:#262626;transform:scaleX(0.9571);transform-origin:0 0;">акту</div>
<div class="t" style="left:991.91px;top:829.50px;font-size:13px;line-height:15px;color:#262626;transform:scaleX(0.8577);transform-origin:0 0;">на</div>
<div class="t" style="left:1012.81px;top:829.50px;font-size:13px;line-height:15px;color:#262626;transform:scaleX(1.0920);transform-origin:0 0;">сумму:</div>
<div class="t" style="left:243.72px;top:849.50px;font-size:13px;line-height:15px;color:#262626;transform:scaleX(0.9894);transform-origin:0 0;">Zero рубля 00 м</div>
<div class="r" style="left:240px;top:865px;width:853px;height:1px;background:#2a2a2a;"></div>
<div class="t" style="left:641.21px;top:867.00px;font-size:10.9px;line-height:12px;color:#262626;letter-spacing:0.075px;">прописью</div>
<div class="t" style="left:243.72px;top:884.00px;font-size:13px;line-height:15px;color:#262626;letter-spacing:0.120px;">На указанную сумму следует уменьшить выручку кассы.</div>
<div class="t" style="left:243.81px;top:918.60px;font-size:13px;line-height:15px;color:#262626;transform:scaleX(0.9833);transform-origin:0 0;">Перечисленные</div>
<div class="t" style="left:350.42px;top:918.60px;font-size:13px;line-height:15px;color:#262626;transform:scaleX(1.0109);transform-origin:0 0;">возвращенные</div>
<div class="t" style="left:452.62px;top:918.60px;font-size:13px;line-height:15px;color:#262626;transform:scaleX(0.9886);transform-origin:0 0;">покупателями</div>
<div class="t" style="left:547.91px;top:918.60px;font-size:13px;line-height:15px;color:#262626;transform:scaleX(0.9667);transform-origin:0 0;">(клиентами)</div>
<div class="t" style="left:622.01px;top:918.60px;font-size:13px;line-height:15px;color:#262626;transform:scaleX(0.9858);transform-origin:0 0;">чеки</div>
<div class="t" style="left:656.41px;top:918.60px;font-size:13px;line-height:15px;color:#262626;transform:scaleX(0.9898);transform-origin:0 0;">(ошибочно</div>
<div class="t" style="left:729.71px;top:918.60px;font-size:13px;line-height:15px;color:#262626;transform:scaleX(0.9408);transform-origin:0 0;">пробитые</div>
<div class="t" style="left:793.21px;top:918.60px;font-size:13px;line-height:15px;color:#262626;transform:scaleX(1.0060);transform-origin:0 0;">чеки)</div>
<div class="t" style="left:827.51px;top:918.60px;font-size:13px;line-height:15px;color:#262626;transform:scaleX(0.9922);transform-origin:0 0;">погашены</div>
<div class="t" style="left:892.21px;top:918.60px;font-size:13px;line-height:15px;color:#262626;">и</div>
<div class="t" style="left:902.51px;top:918.60px;font-size:13px;line-height:15px;color:#262626;transform:scaleX(0.9910);transform-origin:0 0;">прилагаются</div>
<div class="t" style="left:981.91px;top:918.60px;font-size:13px;line-height:15px;color:#262626;">к</div>
<div class="t" style="left:992.81px;top:918.60px;font-size:13px;line-height:15px;color:#262626;transform:scaleX(0.9923);transform-origin:0 0;">акту.</div>
<div class="t" style="left:243.72px;top:935.00px;font-size:13px;line-height:15px;color:#262626;letter-spacing:-0.086px;">Приложение: чек(и), заявление.</div>
<div class="t" style="left:243.72px;top:968.60px;font-size:13px;line-height:15px;color:#262626;letter-spacing:0.004px;">Члены комиссии:</div>
<div class="t" style="left:243.72px;top:1002.70px;font-size:13px;line-height:15px;color:#262626;letter-spacing:0.056px;">Заведующий отделом (секцией)</div>
</body></html>
